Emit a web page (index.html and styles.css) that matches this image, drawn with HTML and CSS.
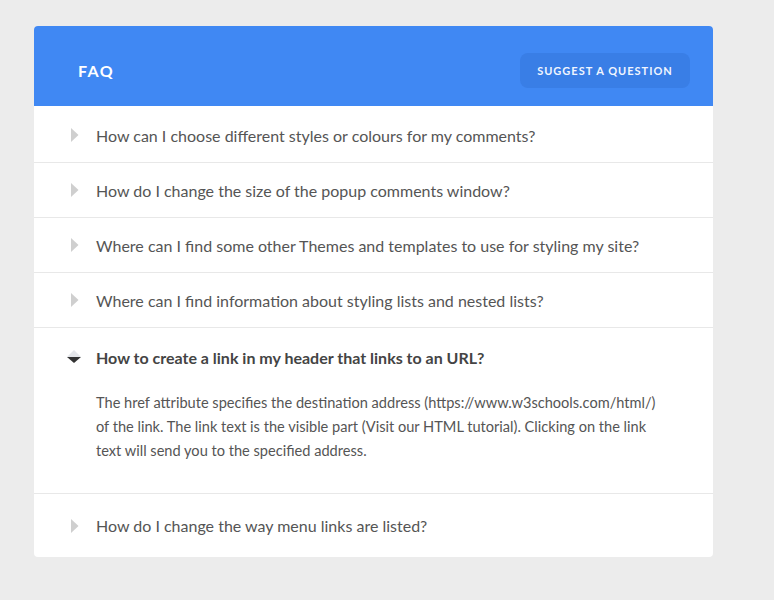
FILE: index.html
```html
<!DOCTYPE html>
<html>
<head>
<meta charset="utf-8">
<link rel="stylesheet" href="styles.css">
</head>
<body>
<div class="faq">
  <div class="faq-header">
    <h1 class="faq-title">FAQ</h1>
    <button class="suggest">SUGGEST A QUESTION</button>
  </div>
  <div class="item first">
    <div class="q"><svg class="arrow" width="8" height="14" viewBox="0 0 8 14"><path d="M0 0 L7.5 7 L0 14 Z" fill="#cfcfcf"/></svg><span>How can I choose different styles or colours for my comments?</span></div>
  </div>
  <div class="item">
    <div class="q"><svg class="arrow" width="8" height="14" viewBox="0 0 8 14"><path d="M0 0 L7.5 7 L0 14 Z" fill="#cfcfcf"/></svg><span>How do I change the size of the popup comments window?</span></div>
  </div>
  <div class="item">
    <div class="q"><svg class="arrow" width="8" height="14" viewBox="0 0 8 14"><path d="M0 0 L7.5 7 L0 14 Z" fill="#cfcfcf"/></svg><span>Where can I find some other Themes and templates to use for styling my site?</span></div>
  </div>
  <div class="item">
    <div class="q"><svg class="arrow" width="8" height="14" viewBox="0 0 8 14"><path d="M0 0 L7.5 7 L0 14 Z" fill="#cfcfcf"/></svg><span>Where can I find information about styling lists and nested lists?</span></div>
  </div>
  <div class="item open">
    <div class="q"><svg class="arrow-down" width="14" height="14" viewBox="0 0 14 14"><path d="M7 0 L14 7 L0 7 Z" fill="#e4e6ea"/><path d="M0 7 L14 7 L7 13 Z" fill="#333"/></svg><span>How to create a link in my header that links to an URL?</span></div>
    <p class="a">The href attribute specifies the destination address (https://www.w3schools.com/html/) of the link. The link text is the visible part (Visit our HTML tutorial). Clicking on the link text will send you to the specified address.</p>
  </div>
  <div class="item last">
    <div class="q"><svg class="arrow" width="8" height="14" viewBox="0 0 8 14"><path d="M0 0 L7.5 7 L0 14 Z" fill="#cfcfcf"/></svg><span>How do I change the way menu links are listed?</span></div>
  </div>
</div>
</body>
</html>
```
FILE: styles.css
```css
html, body {
  margin: 0;
  padding: 0;
  background: #ececec;
}
body {
  padding: 26px 0 0 34px;
  font-family: Lato, "Open Sans", sans-serif;
}
.faq {
  width: 679px;
  background: #fff;
  border-radius: 4px;
  overflow: hidden;
}
.faq-header {
  box-sizing: border-box;
  height: 80px;
  background: #4088f3;
  display: flex;
  align-items: center;
  justify-content: space-between;
  padding: 8px 23px 0 44px;
}
.faq-title {
  margin: 0;
  color: #fff;
  font-size: 16px;
  font-weight: 700;
  letter-spacing: 1.5px;
}
.suggest {
  height: 35px;
  width: 170px;
  border: none;
  border-radius: 8px;
  background: #397ee6;
  color: #f0f5ff;
  font-family: Lato, sans-serif;
  font-size: 11px;
  font-weight: 700;
  letter-spacing: 1px;
}
.item {
  border-bottom: 1px solid #e8e8e8;
}
.item.first {
  padding-top: 2px;
}
.item.last {
  border-bottom: none;
}
.q {
  height: 54px;
  display: flex;
  align-items: center;
  color: #555;
  font-size: 16px;
}
.last .q {
  height: 63px;
}
.arrow {
  margin-left: 37px;
  margin-right: 17px;
}
.arrow-down {
  margin-left: 33px;
  margin-right: 15px;
}
.open .q {
  height: 58px;
  font-weight: 700;
  color: #444;
}
.a {
  margin: 0;
  padding: 5px 48px 30px 62px;
  color: #555;
  font-size: 14.6px;
  line-height: 24px;
}
```
